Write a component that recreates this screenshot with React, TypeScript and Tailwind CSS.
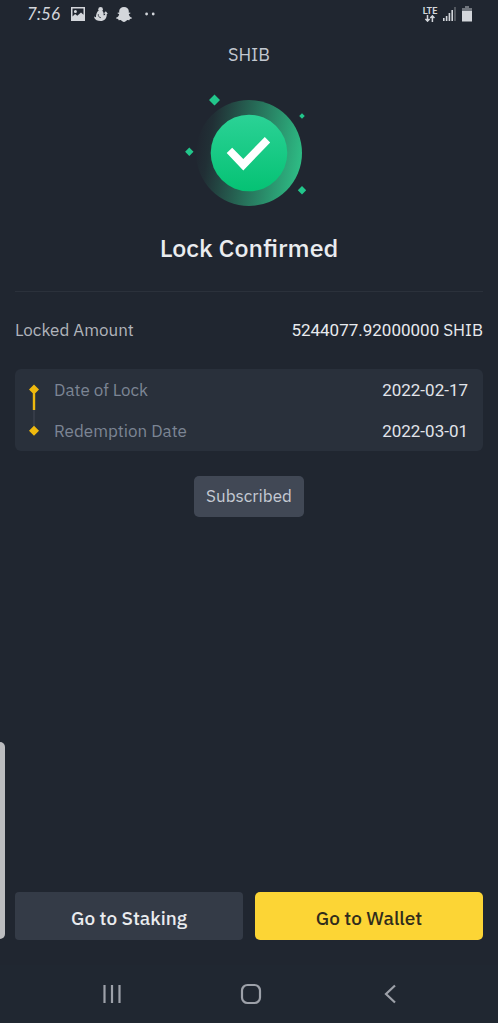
import type { ReactNode } from "react";

function StatusBar() {
  return (
    <div className="flex h-7 items-center justify-between pr-[26px] pl-[27px] text-[#d3d6db]">
      <div className="flex items-center">
        <time className="w-11 font-[Lato,sans-serif] text-[17px] leading-7 italic">7:56</time>
        <svg width="14" height="14" viewBox="0 0 14 14" fill="currentColor" aria-hidden="true">
          <path
            fillRule="evenodd"
            d="M0 0h14v14H0zM1.5 1.5v8l2.6-2.6 2.2 1.8L10 5.4l2.5 2.4V1.5zM4.4 2.9a1.5 1.5 0 1 1 0 3 1.5 1.5 0 0 1 0-3z"
          />
        </svg>
        <svg className="ml-[9px]" width="14" height="14" viewBox="0 0 14 14" aria-hidden="true">
          <circle cx="6.600" cy="2.300" r="2.300" fill="currentColor" />
          <path
            d="M4.600 3.600 8.300 3.800c1.400 1.400 1.600 3.100 1.200 4.500 1.100-.1 1.700-.6 1.800-1.600L9.800 6.600 11.800 4.200 13.800 6.800l-1 .1c.1 4.300-2.500 7.100-6.200 7.100C3.400 14 1.300 12.700.5 11.200L0 9.600l2 .6C1.900 7.500 2.800 5.200 4.600 3.600z"
            fill="currentColor"
          />
          <path d="M4.300 7.200c-.2 2 .8 3.300 2.600 3.500" fill="none" stroke="#202630" strokeWidth=".8" />
        </svg>
        <svg className="ml-2" width="16" height="15" viewBox="0 0 16 15" fill="currentColor" aria-hidden="true">
          <path d="M8 0c2.800 0 4.800 1.700 4.800 4v1.800l1.300-.3.400.8-1.700 1c.5 1.700 1.300 2.900 3.200 3.400l-.2.900-2 .5-.4 1.100-2.200-.1C10.100 14 9.300 15 8 15s-2.100-1-3.200-1.900l-2.200.1-.4-1.100-2-.5L0 10.700c1.900-.5 2.700-1.700 3.200-3.400L1.500 6.300l.4-.8 1.300.3V4C3.200 1.700 5.200 0 8 0z" />
        </svg>
        <svg className="ml-[13px]" width="10" height="4" viewBox="0 0 10 4" fill="currentColor" aria-hidden="true">
          <circle cx="1.600" cy="2" r="1.400" />
          <circle cx="8.200" cy="2" r="1.400" />
        </svg>
      </div>
      <div className="flex items-center">
        <div className="flex w-4 flex-col items-center">
          <span className="font-[Roboto,sans-serif] text-[9px] leading-[8px] font-bold">LTE</span>
          <svg width="10" height="7" viewBox="0 0 10 7" fill="none" stroke="currentColor" strokeWidth="1.500" aria-hidden="true">
            <path d="M2.500 0v6M.4 3.900l2.100 2.200 2.100-2.200M7.400 7V1M5.300 3.100 7.400.9l2.100 2.200" />
          </svg>
        </div>
        <svg className="ml-[5px]" width="13" height="14" viewBox="0 0 13 14" fill="currentColor" aria-hidden="true">
          <path d="M0 11h1.600v3H0zM2.800 9h1.600v5H2.800zM5.600 6h1.600v8H5.600zM8.400 3H10v11H8.400z" />
          <path d="M11.200 0h1.600v14h-1.600z" opacity=".35" />
        </svg>
        <svg className="ml-[6px]" width="10" height="16" viewBox="0 0 10 16" fill="currentColor" aria-hidden="true">
          <path d="M3 0h4v2h3v3H0V2h3z" opacity=".45" />
          <path d="M0 5h10v10.500H0z" />
        </svg>
      </div>
    </div>
  );
}

function SuccessMark() {
  return (
    <svg className="mx-auto block" width="130" height="116" viewBox="184 92 130 116" role="img" aria-label="Success">
      <defs>
        <linearGradient id="ring" x1="0" y1="0.420" x2="1" y2="0.580">
          <stop offset="0" stopColor="#2ebd85" stopOpacity="0" />
          <stop offset="0.120" stopColor="#2ebd85" stopOpacity="0.060" />
          <stop offset="1" stopColor="#2ebd85" />
        </linearGradient>
        <linearGradient id="disc" x1="0" y1="0" x2="0" y2="1">
          <stop offset="0" stopColor="#2bd296" />
          <stop offset="1" stopColor="#05c274" />
        </linearGradient>
      </defs>
      <circle cx="249" cy="153" r="53" fill="url(#ring)" />
      <circle cx="249" cy="153" r="38.300" fill="url(#disc)" />
      <path d="M226.700 153 232.200 147.800 243.300 158.900 264.800 137 270.200 142.600 243.300 170.400z" fill="#fff" />
      <path
        d="M214.500 94.500l5.500 5.500-5.500 5.500-5.500-5.500zM302 113.200l2.800 2.800-2.800 2.800-2.800-2.800zM189.300 147.500l4.200 4.200-4.200 4.200-4.200-4.200zM302 186l4.200 4.200-4.200 4.200-4.200-4.200z"
        fill="#22c68b"
      />
    </svg>
  );
}

function DateRow({ label, value }: { label: string; value: string }) {
  return (
    <div className="flex h-[41px] items-center justify-between">
      <dt className="text-[#7c8594]">{label}</dt>
      <dd className="font-[Roboto,sans-serif] text-[#e1e4ea]">{value}</dd>
    </div>
  );
}

function NavButton({ label, children }: { label: string; children: ReactNode }) {
  return (
    <button type="button" aria-label={label} className="flex h-full items-center justify-center">
      <svg width="22" height="22" viewBox="0 0 22 22" fill="none" stroke="#9da1a9" strokeWidth="2.200" aria-hidden="true">
        {children}
      </svg>
    </button>
  );
}

export default function App() {
  return (
    <div className="relative flex min-h-screen flex-col bg-[#202630] font-['IBM_Plex_Sans',Roboto,sans-serif] text-[17px] leading-6">
      <StatusBar />
      <header className="flex h-[54px] items-center justify-center text-[18px] text-[#c3c8d0]">SHIB</header>
      <main className="flex flex-1 flex-col px-[15px] pt-[10px]">
        <SuccessMark />
        <h1 className="mt-6 text-center text-[25px] leading-8 font-medium text-[#eaecef]">Lock Confirmed</h1>
        <hr className="mt-[27px] border-[#2b313b]" />
        <dl className="mt-[26px] flex items-center justify-between">
          <dt className="text-[#b0b4bb]">Locked Amount</dt>
          <dd className="text-[#e8eaee]">
            <span className="font-[Roboto,sans-serif]">5244077.92000000</span> SHIB
          </dd>
        </dl>
        <div className="mt-[27px] flex rounded-md bg-[#29303b] pr-[15px] pl-[13px]">
          <svg className="shrink-0" width="12" height="82" viewBox="0 0 12 82" aria-hidden="true">
            <path d="M5 41h2v20H5z" fill="#353b47" />
            <path d="M4.800 21h2.400v20H4.800zM6 15.500l5 5-5 5-5-5zM6 56.700l5 5-5 5-5-5z" fill="#efb90e" />
          </svg>
          <dl className="ml-[14px] flex-1">
            <DateRow label="Date of Lock" value="2022-02-17" />
            <DateRow label="Redemption Date" value="2022-03-01" />
          </dl>
        </div>
        <div className="mt-[25px] self-center rounded-[5px] bg-[#414855] px-3 py-2 leading-[25px] text-[#c5cad3]">
          Subscribed
        </div>
        <div className="mt-auto grid grid-cols-2 gap-3 text-[19px] font-medium">
          <button type="button" className="h-12 rounded bg-[#343b47] pt-[3px] text-[#eaecef]">
            Go to Staking
          </button>
          <button type="button" className="h-12 rounded-[5px] bg-[#fcd535] pt-[3px] text-[#302c1c]">
            Go to Wallet
          </button>
        </div>
      </main>
      <nav className="mt-[25px] grid h-[58px] grid-cols-3 bg-[#202731] pr-[38px] pl-[42px]">
        <NavButton label="Recent apps">
          <path d="M3.500 2v18M11 2v18M18.500 2v18" />
        </NavButton>
        <NavButton label="Home">
          <rect x="2" y="2" width="18" height="18" rx="5.500" />
        </NavButton>
        <NavButton label="Back">
          <path d="M16 2.500 7 11l9 8.500" />
        </NavButton>
      </nav>
      <div className="absolute bottom-[84px] left-0 h-[197px] w-[5px] rounded-r-md bg-[#bcbdc0]" />
    </div>
  );
}
